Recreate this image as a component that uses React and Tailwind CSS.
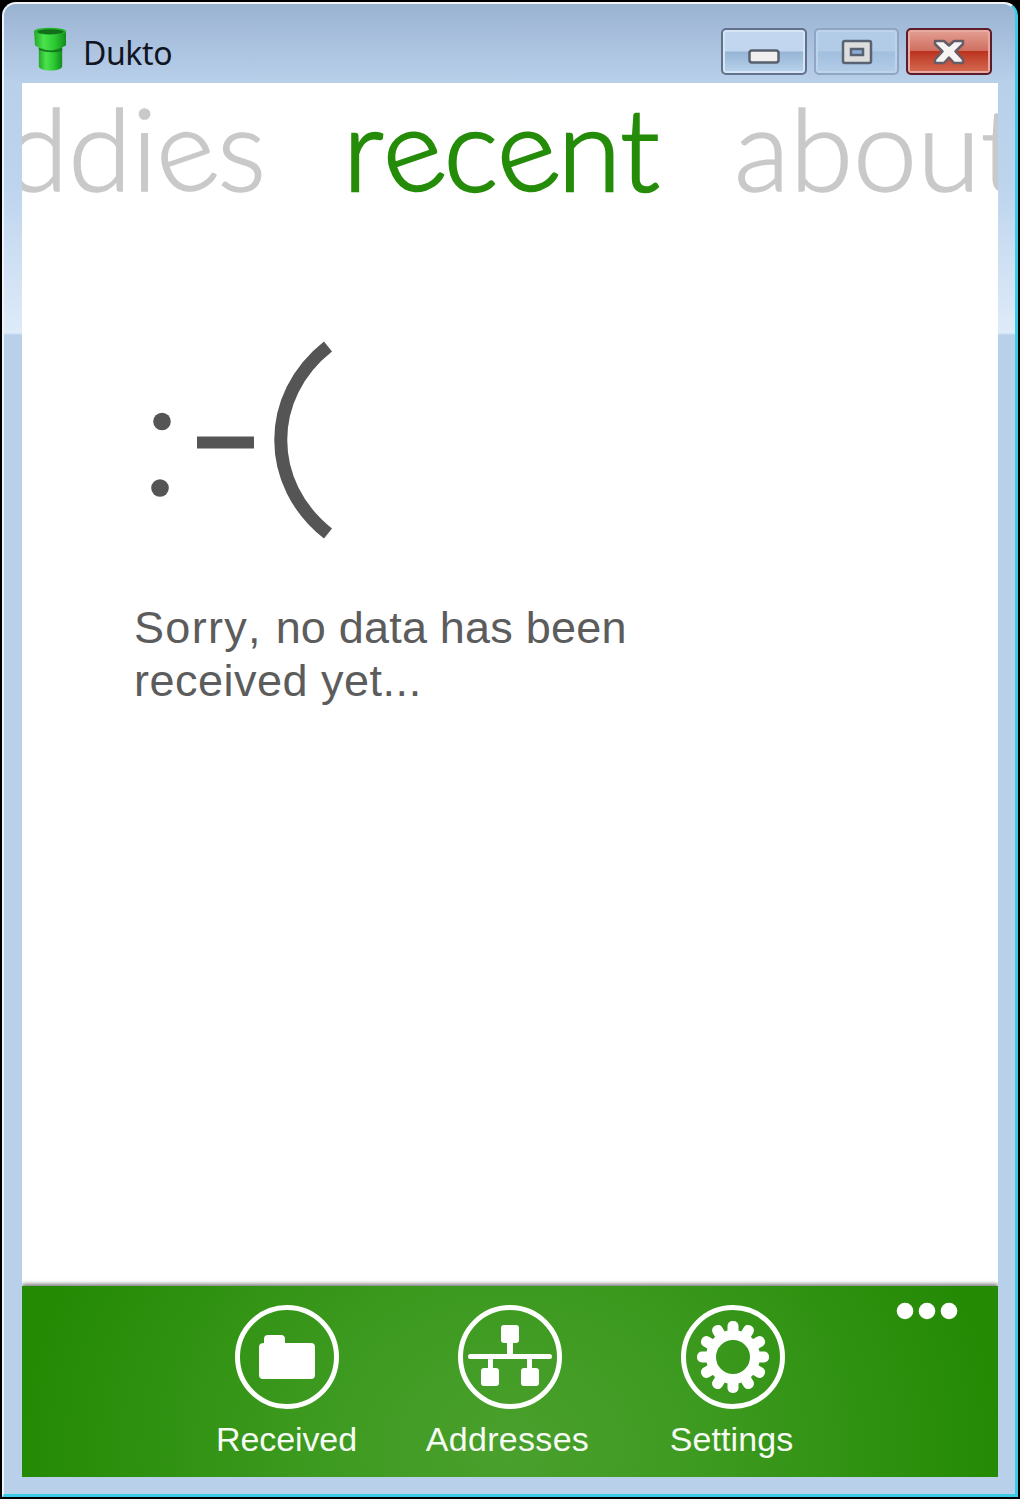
const teeth = [0, 30, 60, 90, 120, 150, 180, 210, 240, 270, 300, 330];

function PipeIcon() {
  return (
    <svg className="mt-[11px] h-[44px] w-[33px] shrink-0" viewBox="0 0 34 46" preserveAspectRatio="none">
      <defs>
        <linearGradient id="pipe" x1="0" x2="1" y1="0" y2="0">
          <stop offset="0" stopColor="#23a62b" />
          <stop offset="0.3" stopColor="#4be34c" />
          <stop offset="0.65" stopColor="#2cc832" />
          <stop offset="1" stopColor="#128c1d" />
        </linearGradient>
      </defs>
      <path d="M5 20h24v21c0 6-24 6-24 0Z" fill="url(#pipe)" />
      <path d="M5 22q12 5 24 0v3q-12 3-24-1Z" fill="#14791d" />
      <path d="M0 4h33v15c-5 5-28 5-32 0Z" fill="url(#pipe)" />
      <ellipse cx="16.500" cy="4.500" rx="16.500" ry="3.800" fill="#27b52e" />
      <ellipse cx="17" cy="5" rx="13.500" ry="2.700" fill="#116f1a" />
    </svg>
  );
}

function WindowButtons() {
  return (
    <div className="flex gap-[7px]">
      <button className="flex h-[47px] w-[86px] items-center justify-center rounded-[5px] border-2 border-[#62728a] bg-linear-to-b from-[#c2d7ef] from-48% via-[#97b5d5] via-52% to-[#b8d3ec] shadow-[inset_0_0_0_2px_#d5e5f6]">
        <svg width="32" height="16" viewBox="0 0 32 16" className="mt-[10px]">
          <rect x="1.500" y="1.500" width="29" height="12" rx="2.500" fill="#f1f0ef" stroke="#58606f" strokeWidth="2.500" />
        </svg>
      </button>
      <button className="flex h-[47px] w-[85px] items-center justify-center rounded-[5px] border-2 border-[#8fa5c2] bg-linear-to-b from-[#b2cbe7] from-48% via-[#a2bfdf] via-52% to-[#b3cde8] shadow-[inset_0_0_0_2px_#bed3ec]">
        <svg width="32" height="26" viewBox="0 0 32 26">
          <rect x="2" y="2" width="28" height="22" rx="2" fill="#dedddd" stroke="#596273" strokeWidth="2.500" />
          <rect x="10" y="10" width="12" height="6" fill="#8caed4" stroke="#596273" strokeWidth="2.500" />
        </svg>
      </button>
      <button className="flex h-[47px] w-[86px] items-center justify-center rounded-[5px] border-2 border-[#5c1c2b] bg-linear-to-b from-[#e29b8f] from-5% via-[#cf6f60] via-48% to-[#d86a54] shadow-[inset_0_0_0_2px_#e9aa9f]">
        <span className="flex h-[39px] w-[78px] items-center justify-center bg-linear-to-b from-transparent from-48% via-[#bb321d] via-50% to-[#d3674f]">
          <svg width="34" height="28" viewBox="0 0 34 28">
            <path d="M3 3H12L17 7.500 22 3H31V6L23.500 13.500 31 21.500V25H22L17 19.500 12 25H3V21.500L10.500 13.500 3 6Z" fill="#f7f5f4" stroke="#665c68" strokeWidth="2.500" strokeLinejoin="round" />
          </svg>
        </span>
      </button>
    </div>
  );
}

function Frown() {
  return (
    <svg className="ml-[122px] mt-[134px] h-[210px] w-[200px]" viewBox="144 334 200 210" fill="#555">
      <circle cx="162" cy="421.500" r="8.800" />
      <circle cx="160" cy="488" r="8.800" />
      <rect x="197" y="436.500" width="57" height="12" />
      <path d="M328 346.500C265 396 265 484 328 533.500" fill="none" stroke="#555" strokeWidth="13" />
    </svg>
  );
}

function TiltedE() {
  return <span className="inline-block origin-[50%_86px] -rotate-[19deg]">e</span>;
}

function Action({ label, text, children }) {
  return (
    <button className="flex w-[223px] flex-col items-center">
      <svg className="h-[106px] w-[106px]" viewBox="-53 -53 106 106" fill="white">
        <circle r="49.500" fill="none" stroke="white" strokeWidth="5" />
        {children}
      </svg>
      <span className={"mt-[9px] font-['Liberation_Sans'] text-[34px] leading-[40px] text-[#f6fbf3] " + text}>{label}</span>
    </button>
  );
}

export default function App() {
  return (
    <div className="h-[1499px] w-[1020px] overflow-hidden bg-black pl-[2px] pt-[2px]">
      <div className="flex h-[1495px] w-[1016px] flex-col rounded-t-[14px] border-2 border-b-[3px] border-r-[3px] border-b-[#3ccbe5] border-l-[#edf4fb] border-r-[#3ccbe5] border-t-[#f1f5f9] bg-[#b9d0ea]">
        <header className="flex h-[79px] shrink-0 items-center rounded-t-[12px] bg-linear-to-b from-[#9ab3d1] to-[#b9d0eb] pl-[30px] pr-[23px]">
          <PipeIcon />
          <h1 className="ml-[16px] mt-[18px] grow font-['Noto_Sans'] text-[32px] leading-[40px] tracking-[-0.4px] text-[#111522]">Dukto</h1>
          <div className="mt-[16px]">
            <WindowButtons />
          </div>
        </header>
        <div className="flex grow flex-col bg-[linear-gradient(#b9d0eb,#bdd4ed_100px,#deebf9_250px,#b9d0ea_252px)] pl-[18px] pr-[17px]">
          <main className="flex h-[1394px] w-[976px] flex-col overflow-hidden bg-white">
            <nav className="flex h-[117px] shrink-0 items-start whitespace-nowrap font-[Lato] text-[115px] font-light leading-[140px] text-[#c9c9c9]">
              <span className="-mt-[7px] ml-[-17px] w-[338px] shrink-0 [-webkit-text-stroke:1.5px_#c9c9c9]">
                ddi<TiltedE />s
              </span>
              <span className="-mt-[7px] w-[391px] shrink-0 tracking-[0px] text-[#258c09] [-webkit-text-stroke:2.4px_#258c09]">
                r<TiltedE />c<TiltedE />nt
              </span>
              <span className="-mt-[7px] shrink-0 tracking-[0px] [-webkit-text-stroke:1.5px_#c9c9c9]">about</span>
            </nav>
            <Frown />
            <p className="ml-[112px] mt-[57px] font-['Liberation_Sans'] text-[45px] leading-[53px] tracking-[0.2px] text-[#5c5c5c] [font-kerning:none]">
              <span className="tracking-[1.3px]">Sorry, </span>no data has been
              <br />
              <span className="tracking-[0.5px]">received yet...</span>
            </p>
            <footer className="mt-auto flex h-[191px] shrink-0 justify-end bg-[radial-gradient(ellipse_490px_400px_at_50%_85%,#4aa02d_0%,#3d9a20_40%,#248a04_100%)] pt-[18px] shadow-[0_-2px_4px_#777]">
              <div className="flex">
                <Action label="Received" text="tracking-[-0.1px]">
                  <path d="M-23-14v-4q0-4 4-4h13q4 0 4 4v4h26q4 0 4 4v28q0 4-4 4h-48q-4 0-4-4v-28q0-4 5-4Z" />
                </Action>
                <Action label="Addresses" text="tracking-[0.3px] ml-[-4px]">
                  <path d="M-3-18h6v15h37q2 0 2 2.500t-2 2.500H22v10h-5V2h-34v10h-5V2h-18q-2 0-2-2.500t2-2.500h37Z" />
                  <rect x="-9" y="-32" width="18" height="18" rx="3" />
                  <rect x="-29" y="11" width="18" height="18" rx="3" />
                  <rect x="11" y="11" width="18" height="18" rx="3" />
                </Action>
                <Action label="Settings" text="tracking-[0.1px] ml-[-2px]">
                  <circle r="22" fill="none" stroke="white" strokeWidth="10" />
                  {teeth.map((a) => (
                    <rect key={a} x="-5.500" y="-36" width="11" height="14" rx="5" transform={`rotate(${a})`} />
                  ))}
                </Action>
              </div>
              <svg className="ml-[51px] mr-[39px] h-[20px] w-[64px] shrink-0 overflow-visible" viewBox="0 0 64 20" fill="white">
                <circle cx="10" cy="7" r="8.300" />
                <circle cx="32" cy="7" r="8.300" />
                <circle cx="54" cy="7" r="8.300" />
              </svg>
            </footer>
          </main>
        </div>
      </div>
    </div>
  );
}
